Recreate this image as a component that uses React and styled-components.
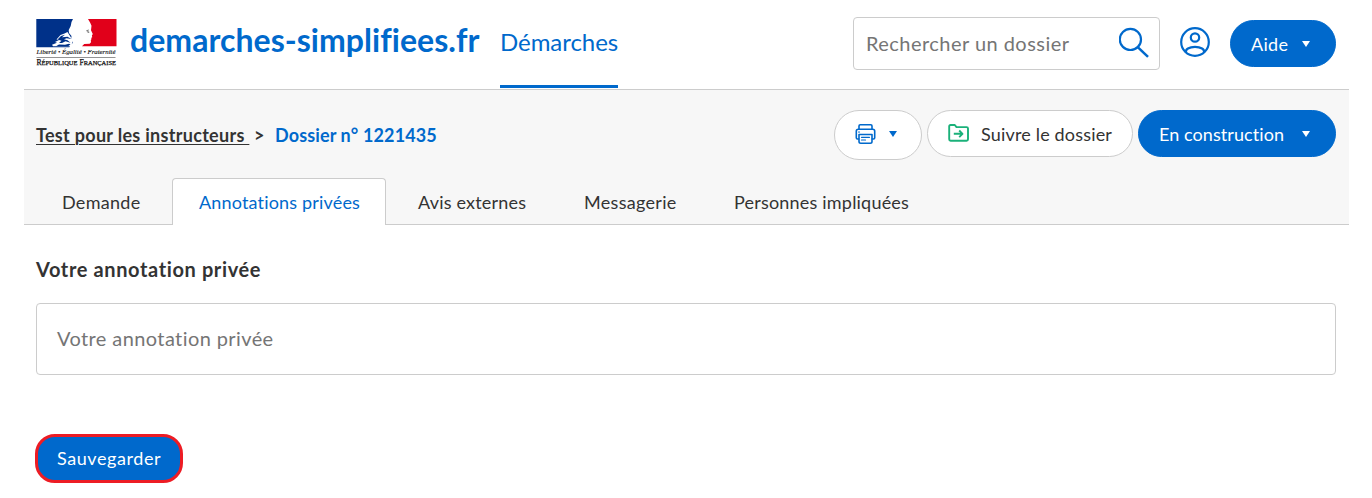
import React from 'react';
import styled, { createGlobalStyle } from 'styled-components';

const BLUE = '#0069cc';
const BORDER = '#cccccc';

const GlobalStyle = createGlobalStyle`
  * { box-sizing: border-box; }
  body {
    margin: 0;
    background: #ffffff;
    color: #333333;
    font-family: Lato, "Open Sans", sans-serif;
    font-size: 18px;
    -webkit-font-smoothing: antialiased;
  }
  button, input { font-family: inherit; }
`;

const Page = styled.div`
  width: 1325px;
  height: 498px;
  margin-left: 24px;
  overflow: hidden;
`;

const Header = styled.header`
  display: flex;
  align-items: flex-start;
  height: 90px;
  padding: 0 13px 0 12px;
  border-bottom: 1px solid ${BORDER};
`;

const LogoLink = styled.div`
  width: 81px;
  height: 50px;
  margin: 18px 13px 0 0;
  svg { display: block; }
`;

const Label = styled.span`
  display: block;
  white-space: pre;
  letter-spacing: ${(p) => p.$spacing || 0}px;
`;

const SiteName = styled.div`
  width: 357px;
  padding-top: 20px;
  color: ${BLUE};
  font-size: 32px;
  font-weight: 700;
  line-height: 40px;
`;

const NavLink = styled.div`
  width: 118px;
  height: 88px;
  margin-left: 13px;
  padding-top: 26px;
  border-bottom: 3px solid ${BLUE};
  color: ${BLUE};
  font-size: 24px;
  line-height: 32px;
`;

const HeaderTools = styled.div`
  display: flex;
  align-items: flex-start;
  margin-left: auto;
`;

const SearchBox = styled.div`
  display: flex;
  align-items: center;
  justify-content: space-between;
  width: 307px;
  height: 53px;
  margin: 17px 20px 0 0;
  padding: 0 10px 2px 12px;
  border: 1px solid ${BORDER};
  border-radius: 4px;
  color: #757575;
  font-size: 20px;
`;

const Account = styled.div`
  width: 30px;
  height: 30px;
  margin: 27px 20px 0 0;
  svg { display: block; }
`;

const Pill = styled.button`
  display: flex;
  align-items: center;
  width: ${(p) => p.$width}px;
  height: ${(p) => p.$height || 47}px;
  margin: ${(p) => p.$top || 0}px 0 0;
  padding: 0 20px ${(p) => p.$lift || 0}px;
  border: 1px solid ${(p) => (p.$primary ? BLUE : BORDER)};
  border-radius: 30px;
  background: ${(p) => (p.$primary ? BLUE : '#ffffff')};
  color: ${(p) => (p.$primary ? '#ffffff' : '#333333')};
  font-size: 18px;
  line-height: 24px;
`;

const Caret = styled.span`
  width: 0;
  height: 0;
  margin-left: auto;
  margin-right: ${(p) => p.$inset || 5}px;
  border-left: 4px solid transparent;
  border-right: 4px solid transparent;
  border-top: 6px solid ${(p) => p.$color || '#ffffff'};
`;

const SubHeader = styled.section`
  display: flex;
  flex-direction: column;
  justify-content: space-between;
  height: 135px;
  padding: 20px 13px 0 12px;
  background: #f7f7f7;
  box-shadow: inset 0 -1px 0 ${BORDER};
`;

const TitleRow = styled.div`
  display: flex;
  align-items: flex-start;
`;

const Breadcrumb = styled.div`
  display: flex;
  padding-top: 13px;
  font-size: 18px;
  font-weight: 700;
  line-height: 24px;
`;

const CrumbLink = styled.a`
  width: 213px;
  text-decoration: underline;
  text-decoration-thickness: 1px;
  text-underline-offset: 2px;
`;

const Separator = styled.span`
  width: 26px;
  padding-left: 5px;
  font-weight: 700;
`;

const Current = styled.span`
  color: ${BLUE};
`;

const Actions = styled.div`
  display: flex;
  align-items: flex-start;
  gap: 5px;
  margin-left: auto;
  svg { display: block; flex: none; }
`;

const FollowLabel = styled.span`
  margin-left: 12px;
`;

const Tabs = styled.nav`
  display: flex;
  gap: 5px;
`;

const Tab = styled.div`
  width: ${(p) => p.$width}px;
  height: 47px;
  padding: 11px 0 0 ${(p) => p.$indent || 26}px;
  border: 1px solid ${(p) => (p.$active ? BORDER : 'transparent')};
  border-bottom: 0;
  border-radius: 4px 4px 0 0;
  background: ${(p) => (p.$active ? '#ffffff' : 'none')};
  color: ${(p) => (p.$active ? BLUE : '#333333')};
  font-size: 18px;
  line-height: 24px;
`;

const Form = styled.main`
  display: flex;
  flex-direction: column;
  align-items: flex-start;
  padding: 29px 13px 0 12px;
`;

const FieldLabel = styled.label`
  font-size: 20px;
  font-weight: 700;
  line-height: 30px;
`;

const Field = styled.div`
  display: flex;
  align-items: center;
  width: 100%;
  height: 72px;
  margin-top: 19px;
  padding: 0 20px 2px;
  border: 1px solid ${BORDER};
  border-radius: 4px;
  color: #757575;
  font-size: 20px;
`;

const SaveButton = styled.button`
  width: 148px;
  height: 49px;
  margin: 59px 0 0 -1px;
  padding: 0 0 1px 19px;
  border: 3px solid #ed1c24;
  border-radius: 20px;
  background: ${BLUE};
  color: #ffffff;
  font-size: 18px;
  text-align: left;
`;

const RepublicLogo = () => (
  <svg width="81" height="50" viewBox="0 0 81 50">
    <path fill="#003189" d="M.3 1H37l-1.500 3-.8 4-2 4 .3 3 2.500 3-.3 3 1.600 4-2 1.500-1.500 2.700H.3z" />
    <path fill="#fff" d="M19 24l4-2-2.500-.5 4-4.500 4-1.500 3-1.500 5 8-1 6.300H17l-1-1.500 5-2z" />
    <path fill="#003189" d="M21.500 21.500l3.500-3.500 4-1.200-3 2.500 5.500-.6 4 2.300-5-.8-2.500 1 3.500 1 3 2.500-5-1.500-3.500 1.800h-3l2.500-2.200zM20 28.200l3-1.700 6 .2 4-.9 1.500.8-2.500 1.600z" />
    <path fill="#e1001a" d="M52 1h28.500v27.200H46l2.200-2.200 5.500-.2 1.300-1.600-.2-2.200.8-1-.5-1 1.100-.7-.3-2.200 1-.8-1.900-4.100.5-4.400-1.300-3z" />
    <path stroke="#666" strokeWidth=".9" fill="none" d="M50.300 12.800l2.500-.8m-1.300 1.200l.8 1.700m.3-1.500l.2 1.400" />
    <text x=".5" y="36" textLength="79" lengthAdjust="spacingAndGlyphs" fontFamily="Liberation Serif, serif" fontStyle="italic" fontSize="6.300" fill="#111" stroke="#111" strokeWidth=".12">Liberté • Égalité • Fraternité</text>
    <path d="M.5 39.500h79" stroke="#777" strokeWidth=".8" />
    <text x=".5" y="47.300" textLength="79.500" lengthAdjust="spacingAndGlyphs" fontFamily="Liberation Serif, serif" fontSize="7.500" fill="#111" stroke="#111" strokeWidth=".25">R<tspan fontSize="6.400">ÉPUBLIQUE</tspan> F<tspan fontSize="6.400">RANÇAISE</tspan></text>
  </svg>
);

const SearchIcon = () => (
  <svg width="30" height="31" viewBox="0 0 30 31" fill="none" stroke={BLUE} strokeWidth="2.200">
    <circle cx="11.400" cy="12.400" r="10.600" />
    <path d="M19 20.300l10 9.500" strokeWidth="2.500" />
  </svg>
);

const AccountIcon = () => (
  <svg width="30" height="30" viewBox="0 0 30 30" fill="none" stroke={BLUE} strokeWidth="2.200">
    <circle cx="15" cy="15" r="13.800" />
    <circle cx="15" cy="10.500" r="4.200" />
    <path d="M6 25.200c-.8-2.700 3-5.400 9-5.400s9.800 2.700 9 5.400" />
  </svg>
);

const PrintIcon = () => (
  <svg width="21" height="20" viewBox="0 0 20 20" fill="none" stroke={BLUE} strokeWidth="1.600" strokeLinejoin="round" strokeLinecap="round">
    <path d="M3.500 5V2q0-1.200 1.200-1.200h10.600q1.200 0 1.200 1.200v3" />
    <path d="M3.300 15H2q-1.200 0-1.200-1.200V7.200Q.8 5.300 2.700 5.300h14.600q1.900 0 1.900 1.900v6.600q0 1.200-1.200 1.200h-1.300" />
    <path d="M3.500 10.500h13v7q0 1.700-1.700 1.700H5.200q-1.700 0-1.700-1.700z" />
    <path d="M3 8h1M6 13.300h8M6 16h4" strokeWidth="1.200" />
  </svg>
);

const FollowIcon = () => (
  <svg width="21" height="19" viewBox="0 0 21 19" fill="none" stroke="#1bb17a" strokeWidth="1.900" strokeLinejoin="round">
    <path d="M1.200 15.300V2.300Q1.200 1 2.500 1h4.300l1.700 2.100h10Q20 3.100 20 4.600v10.700q0 1.400-1.400 1.400h-16q-1.400 0-1.400-1.400z" />
    <path d="M5.800 9.800h9M11.200 6.500l3.300 3.300-3.300 3.300" />
  </svg>
);

const TABS = [
  { label: 'Demande', width: 131, spacing: 0.3, indent: 25 },
  { label: 'Annotations privées', width: 214, spacing: 0.17, active: true },
  { label: 'Avis externes', width: 161, spacing: 0.2 },
  { label: 'Messagerie', width: 145, spacing: 0.3 },
  { label: 'Personnes impliquées', width: 228, spacing: 0.2 },
];

export default function App() {
  return (
    <Page>
      <GlobalStyle />
      <Header>
        <LogoLink><RepublicLogo /></LogoLink>
        <SiteName><Label $spacing={0.04}>demarches-simplifiees.fr</Label></SiteName>
        <NavLink><Label $spacing={-0.05}>Démarches</Label></NavLink>
        <HeaderTools>
          <SearchBox>
            <Label $spacing={0.46}>Rechercher un dossier</Label>
            <SearchIcon />
          </SearchBox>
          <Account><AccountIcon /></Account>
          <Pill $primary $width={106} $top={20}>
            <Label $spacing={0.3}>Aide</Label>
            <Caret />
          </Pill>
        </HeaderTools>
      </Header>
      <SubHeader>
        <TitleRow>
          <Breadcrumb>
            <CrumbLink><Label $spacing={0.3}>{'Test pour les instructeurs '}</Label></CrumbLink>
            <Separator>&gt;</Separator>
            <Current><Label $spacing={0.12}>Dossier n° 1221435</Label></Current>
          </Breadcrumb>
          <Actions>
            <Pill $width={88} $height={50} $lift={2}>
              <PrintIcon />
              <Caret $color={BLUE} $inset={4} />
            </Pill>
            <Pill $width={206}>
              <FollowIcon />
              <FollowLabel><Label $spacing={0.17}>Suivre le dossier</Label></FollowLabel>
            </Pill>
            <Pill $primary $width={198}>
              <Label $spacing={0.08}>En construction</Label>
              <Caret />
            </Pill>
          </Actions>
        </TitleRow>
        <Tabs>
          {TABS.map((t) => (
            <Tab key={t.label} $width={t.width} $active={t.active} $indent={t.indent}>
              <Label $spacing={t.spacing}>{t.label}</Label>
            </Tab>
          ))}
        </Tabs>
      </SubHeader>
      <Form>
        <FieldLabel><Label $spacing={0.62}>Votre annotation privée</Label></FieldLabel>
        <Field><Label $spacing={0.4}>Votre annotation privée</Label></Field>
        <SaveButton><Label $spacing={0.58}>Sauvegarder</Label></SaveButton>
      </Form>
    </Page>
  );
}
